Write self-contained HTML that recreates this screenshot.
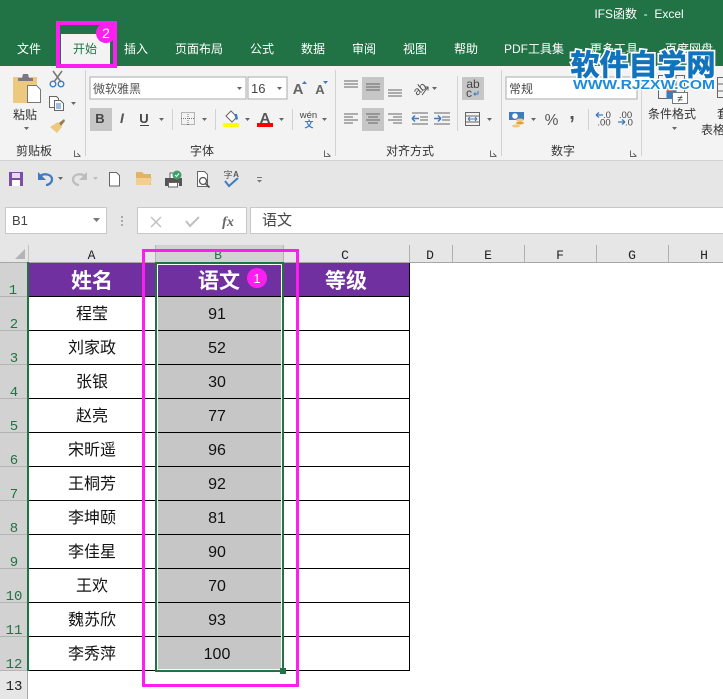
<!DOCTYPE html>
<html><head><meta charset="utf-8"><style>
html,body{margin:0;padding:0;background:#fff}
svg{display:block;font-family:"Liberation Sans","Noto Sans CJK SC",sans-serif}
.r rect,.c{shape-rendering:crispEdges}
.t{font-size:12px;fill:#fff;text-anchor:middle}
.g{font-size:12px;fill:#444;text-anchor:middle}
.n{font-size:16px;fill:#111;text-anchor:middle}
.h{font-size:21px;font-weight:bold;fill:#fff;text-anchor:middle}
.col{font-family:"Liberation Mono",monospace;font-size:13px;fill:#222;text-anchor:middle}
.row{font-family:"Liberation Mono",monospace;font-size:14px;fill:#217346;text-anchor:middle}
.ln{stroke:#666;stroke-width:1;fill:none;shape-rendering:crispEdges}
</style></head><body>
<svg width="723" height="699" viewBox="0 0 723 699" xmlns="http://www.w3.org/2000/svg">
<g class="r">
<rect width="723" height="699" fill="#fff"/>
<rect width="723" height="66" fill="#217346"/>
<rect y="66" width="723" height="94" fill="#f3f3f3"/>
<rect y="160" width="723" height="1" fill="#d2d2d2"/>
<rect y="161" width="723" height="101" fill="#e6e6e6"/>
<rect x="61" y="34" width="49" height="32" fill="#f3f3f3"/>
<rect x="85" y="70" width="1" height="86" fill="#d2d2d2"/>
<rect x="335" y="70" width="1" height="86" fill="#d2d2d2"/>
<rect x="501" y="70" width="1" height="86" fill="#d2d2d2"/>
<rect x="641" y="70" width="1" height="86" fill="#d2d2d2"/>
<rect x="457" y="76" width="1" height="55" fill="#d2d2d2"/>
<rect x="90" y="77" width="156" height="22" fill="#fff" stroke="#ababab"/>
<rect x="248" y="77" width="39" height="22" fill="#fff" stroke="#ababab"/>
<rect x="506" y="77" width="131" height="22" fill="#fff" stroke="#ababab"/>
<rect x="90" y="108" width="22" height="23" fill="#c6c6c6"/>
<rect x="362" y="77" width="22" height="23" fill="#c6c6c6"/>
<rect x="362" y="108" width="22" height="23" fill="#c6c6c6"/>
<rect x="462" y="77" width="22" height="23" fill="#c6c6c6"/>
<rect x="172" y="109" width="1" height="21" fill="#d2d2d2"/>
<rect x="215" y="109" width="1" height="21" fill="#d2d2d2"/>
<rect x="292" y="109" width="1" height="21" fill="#d2d2d2"/>
<rect x="588" y="109" width="1" height="21" fill="#d2d2d2"/>
<rect x="5.500" y="207.500" width="101" height="26" fill="#fff" stroke="#c8c8c8"/>
<rect x="137.500" y="207.500" width="109" height="26" fill="#fff" stroke="#c8c8c8"/>
<rect x="250.500" y="207.500" width="480" height="26" fill="#fff" stroke="#c8c8c8"/>
<rect x="155" y="245" width="129" height="18" fill="#d2d2d2"/>
<rect y="263" width="28" height="408" fill="#d2d2d2"/>
<rect y="671" width="28" height="28" fill="#e6e6e6"/>
<rect y="262" width="723" height="1" fill="#a6a6a6"/>
<rect x="27" y="263" width="1" height="436" fill="#aaa"/>
<rect x="28" y="245" width="1" height="18" fill="#c4c4c4"/>
<rect x="155" y="245" width="1" height="18" fill="#b4b4b4"/>
<rect x="283" y="245" width="1" height="18" fill="#b4b4b4"/>
<rect x="409" y="245" width="1" height="18" fill="#b0b0b0"/>
<rect x="452" y="245" width="1" height="18" fill="#b0b0b0"/>
<rect x="524" y="245" width="1" height="18" fill="#b0b0b0"/>
<rect x="596" y="245" width="1" height="18" fill="#b0b0b0"/>
<rect x="668" y="245" width="1" height="18" fill="#b0b0b0"/>
<rect x="29" y="263" width="380" height="33" fill="#7030a0"/>
<rect x="157" y="297" width="125" height="373" fill="#c6c6c6"/>
<rect x="29" y="296" width="381" height="1" fill="#000"/>
<rect x="29" y="330" width="381" height="1" fill="#000"/>
<rect x="29" y="364" width="381" height="1" fill="#000"/>
<rect x="29" y="398" width="381" height="1" fill="#000"/>
<rect x="29" y="432" width="381" height="1" fill="#000"/>
<rect x="29" y="466" width="381" height="1" fill="#000"/>
<rect x="29" y="500" width="381" height="1" fill="#000"/>
<rect x="29" y="534" width="381" height="1" fill="#000"/>
<rect x="29" y="568" width="381" height="1" fill="#000"/>
<rect x="29" y="602" width="381" height="1" fill="#000"/>
<rect x="29" y="636" width="381" height="1" fill="#000"/>
<rect x="29" y="670" width="381" height="1" fill="#000"/>
<rect x="409" y="263" width="1" height="408" fill="#000"/>
<rect x="0" y="296" width="27" height="1" fill="#b4b4b4"/>
<rect x="0" y="330" width="27" height="1" fill="#b4b4b4"/>
<rect x="0" y="364" width="27" height="1" fill="#b4b4b4"/>
<rect x="0" y="398" width="27" height="1" fill="#b4b4b4"/>
<rect x="0" y="432" width="27" height="1" fill="#b4b4b4"/>
<rect x="0" y="466" width="27" height="1" fill="#b4b4b4"/>
<rect x="0" y="500" width="27" height="1" fill="#b4b4b4"/>
<rect x="0" y="534" width="27" height="1" fill="#b4b4b4"/>
<rect x="0" y="568" width="27" height="1" fill="#b4b4b4"/>
<rect x="0" y="602" width="27" height="1" fill="#b4b4b4"/>
<rect x="0" y="636" width="27" height="1" fill="#b4b4b4"/>
<rect x="0" y="670" width="27" height="1" fill="#b4b4b4"/>
<rect x="27" y="262" width="2" height="409" fill="#217346"/>
<rect x="155" y="262" width="129" height="2" fill="#217346"/>
<rect x="155" y="670" width="129" height="2" fill="#217346"/>
<rect x="155" y="262" width="2" height="410" fill="#217346"/>
<rect x="282" y="262" width="2" height="410" fill="#217346"/>
<rect x="157" y="264" width="125" height="1" fill="#fff"/>
<rect x="157" y="669" width="125" height="1" fill="#fff"/>
<rect x="157" y="264" width="1" height="406" fill="#fff"/>
<rect x="281" y="264" width="1" height="406" fill="#fff"/>
<rect x="280" y="668" width="6" height="6" fill="#217346"/>
</g>

<text x="639" y="18" font-size="12" fill="#fff" text-anchor="middle" xml:space="preserve">IFS函数  -  Excel</text>
<text class="t" x="29" y="53">文件</text>
<text class="t" x="85" y="53" style="fill:#217346">开始</text>
<text class="t" x="136" y="53">插入</text>
<text class="t" x="199" y="53">页面布局</text>
<text class="t" x="262" y="53">公式</text>
<text class="t" x="313" y="53">数据</text>
<text class="t" x="364" y="53">审阅</text>
<text class="t" x="415" y="53">视图</text>
<text class="t" x="466" y="53">帮助</text>
<text class="t" x="534" y="53">PDF工具集</text>
<text class="t" x="614" y="53">更多工具</text>
<text class="t" x="689" y="53">百度网盘</text>

<!-- clipboard group -->
<path d="M13 77h24v18h-10v8H13z" fill="#edc87e"/>
<path d="M18 81v-3h4l1-4h5l1 4h4v3z" fill="#7a7a7a"/>
<path d="M27.500 85.500h9l4 4v13h-13z" fill="#fff" stroke="#777"/>
<text class="g" x="25" y="119" style="fill:#333">粘贴</text>
<path d="M24 127h5l-2.500 3z" fill="#666"/>
<path d="M53 71l8 11M62 71l-8 11" stroke="#777" stroke-width="1.500" fill="none"/>
<circle cx="53" cy="84" r="2.800" fill="none" stroke="#3f7cbf" stroke-width="1.400"/>
<circle cx="61" cy="84" r="2.800" fill="none" stroke="#3f7cbf" stroke-width="1.400"/>
<path d="M49.500 96.500h7l2 2v9h-9z" fill="#fff" stroke="#666"/>
<path d="M54.500 100.500h6l3 3v7h-9z" fill="#fff" stroke="#666"/>
<path d="M56 104h5M56 106h5M56 108h5" stroke="#3f7cbf"/>
<path d="M71 102h5l-2.500 3z" fill="#666"/>
<path d="M50 127l8-5 4 5-5 6z" fill="#edc87e"/>
<path d="M59 123l5-4 1 2-4 5z" fill="#9a7a50"/>
<text class="g" x="34" y="155" style="fill:#333">剪贴板</text>
<path class="ln" d="M74.500 150.500v6h6M77.500 153.500l3 3" stroke="#888"/>

<!-- font group -->
<text x="93" y="93" font-size="12" fill="#555">微软雅黑</text>
<path d="M237 87h5l-2.500 3z" fill="#666"/>
<text x="251" y="93" font-size="13" fill="#444">16</text>
<path d="M277 87h5l-2.500 3z" fill="#666"/>
<text x="298" y="94" font-size="15" font-weight="bold" fill="#666" text-anchor="middle">A</text>
<path d="M302 84l2.500-3 2.500 3z" fill="#3f7cbf"/>
<text x="320" y="94" font-size="13" font-weight="bold" fill="#666" text-anchor="middle">A</text>
<path d="M323 81h5l-2.500 3z" fill="#3f7cbf"/>
<text x="100" y="123" font-size="13" font-weight="bold" fill="#444" text-anchor="middle">B</text>
<text x="122" y="123" font-size="14" font-style="italic" font-weight="bold" fill="#555" text-anchor="middle">I</text>
<text x="144" y="123" font-size="13" font-weight="bold" fill="#444" text-anchor="middle">U</text>
<rect class="c" x="140" y="125" width="9" height="1" fill="#444"/>
<path d="M159 118h5l-2.500 3z" fill="#666"/>
<path d="M181.500 112.500h13v12h-13zM188 112v13M181 118.500h14" fill="none" stroke="#777" stroke-dasharray="1 1"/>
<path d="M202 118h5l-2.500 3z" fill="#666"/>
<path d="M226 116l5-5 6 6-5 5z" fill="#fff" stroke="#666"/>
<path d="M234 114h3l1 5-2 1z" fill="#3f7cbf"/>
<rect class="c" x="223" y="123" width="16" height="4" fill="#ffff00"/>
<path d="M245 118h5l-2.500 3z" fill="#666"/>
<text x="265" y="123" font-size="15" font-weight="bold" fill="#555" text-anchor="middle">A</text>
<rect class="c" x="257" y="123" width="16" height="4" fill="#ff0000"/>
<path d="M279 118h5l-2.500 3z" fill="#666"/>
<text x="308.500" y="118" font-size="9.500" fill="#444" text-anchor="middle">wén</text>
<text x="309" y="127.500" font-size="9" font-weight="bold" fill="#3f7cbf" text-anchor="middle">文</text>
<path d="M322 118h5l-2.500 3z" fill="#666"/>
<text class="g" x="202" y="155" style="fill:#333">字体</text>
<path class="ln" d="M324.500 150.500v6h6M327.500 153.500l3 3" stroke="#888"/>

<!-- alignment -->
<path class="ln" d="M344 81h14M344 84h14M344 87h14"/>
<path class="ln" d="M366 84h14M366 87h14M366 90h14"/>
<path class="ln" d="M388 90h14M388 93h14M388 96h14"/>
<text x="419" y="93" font-size="12" fill="#555" text-anchor="middle" transform="rotate(-40 419 88)">ab</text>
<path d="M422 95l6-8m-3.500 0h3.500v3.500" fill="none" stroke="#555"/>
<path d="M432 87h5l-2.500 3z" fill="#666"/>
<text x="473" y="88" font-size="12" fill="#444" text-anchor="middle">ab</text>
<text x="469" y="97" font-size="12" fill="#444" text-anchor="middle">c</text>
<path d="M478 91v3h-4m1.500-1.500L474 94l1.500 1.500" fill="none" stroke="#3f7cbf"/>
<path class="ln" d="M344 114h14M344 117h9M344 120h14M344 123h9"/>
<path class="ln" d="M366 114h14M368 117h10M366 120h14M368 123h10"/>
<path class="ln" d="M388 114h14M393 117h9M388 120h14M393 123h9"/>
<path class="ln" d="M412 113h16M420 117h8M420 120h8M412 124h16"/>
<path d="M412 118.500h7m-7 0l3-3m-3 3l3 3" fill="none" stroke="#3f7cbf" stroke-width="1.500"/>
<path class="ln" d="M434 113h16M442 117h8M442 120h8M434 124h16"/>
<path d="M434 118.500h7m0 0l-3-3m3 3l-3 3" fill="none" stroke="#3f7cbf" stroke-width="1.500"/>
<path class="ln" d="M465.500 112.500h14v13h-14zM465 116h15M465 122h15"/>
<path d="M468 119h9M468 119l2-2M468 119l2 2M477 119l-2-2M477 119l-2 2" fill="#fff" stroke="#3f7cbf"/>
<path d="M487 118h5l-2.500 3z" fill="#666"/>
<text class="g" x="410" y="155" style="fill:#333">对齐方式</text>
<path class="ln" d="M490.500 150.500v6h6M493.500 153.500l3 3" stroke="#888"/>

<!-- number -->
<text x="509" y="93" font-size="12" fill="#444">常规</text>
<path d="M509 112h15v8h-15z" fill="#3f7cbf"/>
<circle cx="515" cy="116" r="2.800" fill="#fff"/>
<ellipse cx="520" cy="120" rx="4" ry="1.500" fill="#edc87e"/>
<ellipse cx="520" cy="123" rx="4" ry="1.500" fill="#e8a030"/>
<ellipse cx="516" cy="126" rx="4" ry="1.500" fill="#edc87e"/>
<path d="M531 118h5l-2.500 3z" fill="#666"/>
<text x="551.500" y="125" font-size="15.500" fill="#555" text-anchor="middle">%</text>
<text x="572" y="119" font-size="20" font-weight="bold" fill="#555" text-anchor="middle">,</text>
<text x="607" y="118" font-size="9.500" fill="#444" text-anchor="middle">.0</text>
<text x="604" y="125.500" font-size="9.500" fill="#444" text-anchor="middle">.00</text>
<path d="M596 115h7m-7 0l3-2.500m-3 2.500l3 2.500" fill="none" stroke="#3f7cbf" stroke-width="1.300"/>
<text x="625.500" y="118" font-size="9.500" fill="#444" text-anchor="middle">.00</text>
<text x="629" y="125.500" font-size="9.500" fill="#444" text-anchor="middle">.0</text>
<path d="M618 122h7m0 0l-3-2.500m3 2.500l-3 2.500" fill="none" stroke="#3f7cbf" stroke-width="1.300"/>
<text class="g" x="563" y="155" style="fill:#333">数字</text>
<path class="ln" d="M630.500 150.500v6h6M633.500 153.500l3 3" stroke="#888"/>

<!-- styles -->
<path class="ln" d="M658.500 75.500h26v23h-26zM667 75v24M676 75v24" stroke="#999"/>
<rect class="c" x="667" y="90" width="9" height="9" fill="#3f7cbf"/>
<rect class="c" x="667" y="88" width="6" height="3" fill="#e0603a"/>
<rect class="c" x="672.500" y="92.500" width="15" height="11" fill="#fff" stroke="#777"/>
<text x="680" y="102" font-size="10" fill="#333" text-anchor="middle">≠</text>
<text class="g" x="672" y="118" style="fill:#333">条件格式</text>
<path d="M672 127h5l-2.500 3z" fill="#666"/>
<path class="ln" d="M717.500 77.500h12v20h-12zM717 84h12M717 91h12" stroke="#999"/>
<text x="717" y="118" font-size="12" fill="#333">套用</text>
<text x="701" y="134" font-size="12" fill="#333">表格格式</text>

<!-- QAT -->
<path d="M9 172h14v14H9z" fill="#7d4ea8"/>
<rect class="c" x="12" y="173" width="8" height="5" fill="#e6dcf0"/>
<rect class="c" x="12" y="180" width="8" height="6" fill="#fff"/>
<path d="M40 176c4-3 12-2 12 3.500 0 3-3 5.500-6 5.500" fill="none" stroke="#3f7cbf" stroke-width="2.200"/>
<path d="M38 172v8h8z" fill="#3f7cbf"/>
<path d="M58 177h5l-2.500 3z" fill="#666"/>
<path d="M85 176c-4-3-12-2-12 3.500 0 3 3 5.500 6 5.500" fill="none" stroke="#bdbdbd" stroke-width="2.200"/>
<path d="M87 172v8h-8z" fill="#bdbdbd"/>
<path d="M93 177h5l-2.500 3z" fill="#bdbdbd"/>
<path d="M109.500 172.500h7l3 3v10.500h-10z" fill="#fff" stroke="#666"/>
<path d="M136 172h6l2 2h7v11h-15z" fill="#e0b565"/>
<path d="M136 178h16l-2 7h-14z" fill="#f2cf8e"/>
<rect class="c" x="170" y="173" width="8" height="6" fill="#fff" stroke="#666"/>
<path d="M165 178h17v8h-3v-3h-11v3h-3z" fill="#555"/>
<rect class="c" x="168.500" y="182.500" width="9" height="4.500" fill="#fff" stroke="#666"/>
<circle cx="177" cy="175" r="4.500" fill="#3fa06a"/>
<path d="M175 175l1.500 1.500 2.500-3" stroke="#fff" fill="none"/>
<path d="M197.500 171.500h7l3 3v12h-10z" fill="#fff" stroke="#666"/>
<circle cx="203" cy="181" r="3.500" fill="#fff" stroke="#555" stroke-width="1.300"/>
<path d="M205.500 183.500l4 4" stroke="#555" stroke-width="1.800"/>
<text x="228" y="178" font-size="9" fill="#555" text-anchor="middle">字</text>
<text x="236" y="177" font-size="8" font-weight="bold" fill="#555" text-anchor="middle">A</text>
<path d="M225 181l4 5 9-8" fill="none" stroke="#3f7cbf" stroke-width="2"/>
<path class="c" d="M257 177h5v1h-5z" fill="#777"/>
<path d="M257 180h5l-2.500 2.500z" fill="#777"/>

<!-- formula bar -->
<text x="12" y="225" font-size="13" fill="#444">B1</text>
<path d="M93 218h7l-3.500 4z" fill="#777"/>
<path class="c" d="M121 216h2v2h-2zM121 220h2v2h-2zM121 224h2v2h-2z" fill="#aaa"/>
<path d="M151 217l10 10M161 217l-10 10" stroke="#c0c0c0" stroke-width="1.500"/>
<path d="M186 221l4 5 9-9" stroke="#c0c0c0" stroke-width="2" fill="none"/>
<text x="228" y="226" font-family="Liberation Serif" font-style="italic" font-weight="bold" font-size="14" fill="#666" text-anchor="middle">fx</text>
<text x="262" y="225" font-size="15" fill="#444">语文</text>

<!-- headers -->
<path d="M25 249v10H15z" fill="#b4b4b4"/>
<text class="col" x="91.500" y="259">A</text>
<text class="col" x="218" y="259" style="fill:#217346">B</text>
<text class="col" x="345" y="259">C</text>
<text class="col" x="430" y="259">D</text>
<text class="col" x="488" y="259">E</text>
<text class="col" x="560" y="259">F</text>
<text class="col" x="632" y="259">G</text>
<text class="col" x="704" y="259">H</text>
<text class="row" x="13" y="294">1</text>
<text class="row" x="14" y="328">2</text>
<text class="row" x="14" y="362">3</text>
<text class="row" x="14" y="396">4</text>
<text class="row" x="14" y="430">5</text>
<text class="row" x="14" y="464">6</text>
<text class="row" x="14" y="498">7</text>
<text class="row" x="14" y="532">8</text>
<text class="row" x="14" y="566">9</text>
<text class="row" x="14" y="600">10</text>
<text class="row" x="14" y="634">11</text>
<text class="row" x="14" y="668">12</text>
<text class="row" x="14" y="690" style="fill:#222">13</text>

<!-- cells -->
<text class="h" x="92" y="288">姓名</text>
<text class="h" x="219" y="288">语文</text>
<text class="h" x="346" y="288">等级</text>
<text class="n" x="92" y="319">程莹</text><text class="n" x="217" y="319">91</text>
<text class="n" x="92" y="353">刘家政</text><text class="n" x="217" y="353">52</text>
<text class="n" x="92" y="387">张银</text><text class="n" x="217" y="387">30</text>
<text class="n" x="92" y="421">赵亮</text><text class="n" x="217" y="421">77</text>
<text class="n" x="92" y="455">宋昕遥</text><text class="n" x="217" y="455">96</text>
<text class="n" x="92" y="489">王桐芳</text><text class="n" x="217" y="489">92</text>
<text class="n" x="92" y="523">李坤颐</text><text class="n" x="217" y="523">81</text>
<text class="n" x="92" y="557">李佳星</text><text class="n" x="217" y="557">90</text>
<text class="n" x="92" y="591">王欢</text><text class="n" x="217" y="591">70</text>
<text class="n" x="92" y="625">魏苏欣</text><text class="n" x="217" y="625">93</text>
<text class="n" x="92" y="659">李秀萍</text><text class="n" x="217" y="659">100</text>

<!-- magenta annotations -->
<rect class="c" x="143.500" y="250.500" width="154" height="435" fill="none" stroke="#ff1ef0" stroke-width="3"/>
<rect class="c" x="58" y="23" width="57" height="43" fill="none" stroke="#ff1ef0" stroke-width="4"/>
<circle cx="257" cy="278" r="10" fill="#ff1ef0"/>
<text x="257" y="283" font-size="13" fill="#fff" text-anchor="middle">1</text>
<circle cx="106" cy="33" r="10" fill="#ff1ef0"/>
<text x="106" y="38" font-size="14" fill="#fff" text-anchor="middle">2</text>

<!-- watermark -->
<text x="643" y="75" font-size="29" font-weight="bold" fill="#1273bd" stroke="#fff" stroke-width="4" paint-order="stroke" text-anchor="middle" font-family="Noto Sans CJK SC, sans-serif">软件自学网</text>
<text x="643" y="75" font-size="29" font-weight="bold" fill="#1273bd" stroke="#1273bd" stroke-width="0.800" text-anchor="middle" font-family="Noto Sans CJK SC, sans-serif">软件自学网</text>
<text x="573" y="89" font-size="13" font-weight="bold" fill="#1e8cdc" stroke="#fff" stroke-width="2.500" paint-order="stroke" textLength="142" lengthAdjust="spacingAndGlyphs">WWW.RJZXW.COM</text>
</svg>
</body></html>
